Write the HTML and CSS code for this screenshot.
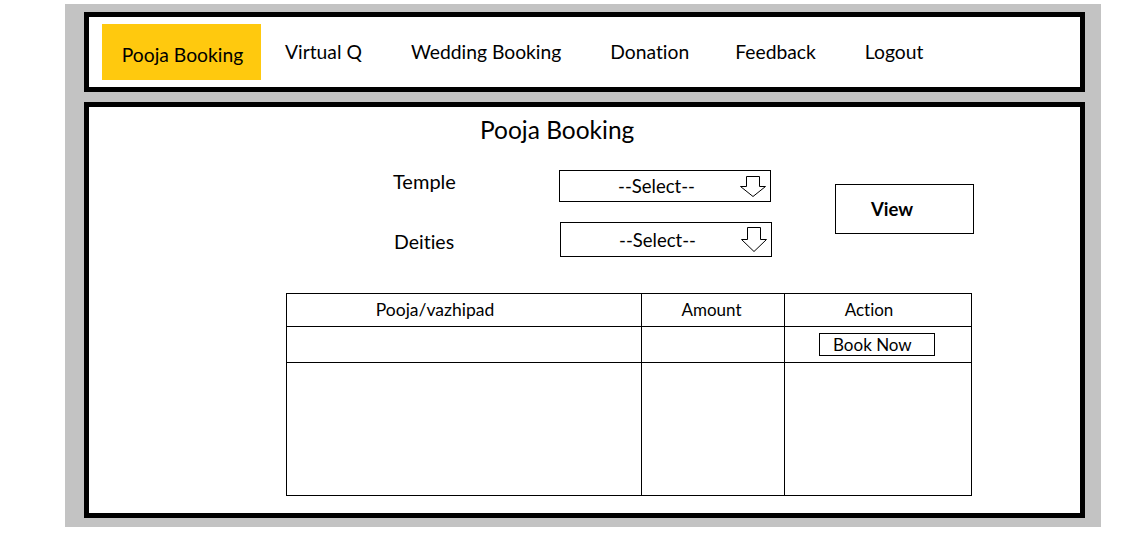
FILE: index.html
```html
<!DOCTYPE html>
<html lang="en">
<head>
<meta charset="utf-8">
<title>Pooja Booking</title>
<link rel="stylesheet" href="styles.css">
</head>
<body>
<div class="frame">
  <nav class="nav">
    <a class="tab tab-active">Pooja Booking</a>
    <div class="links">
      <a class="tab">Virtual Q</a>
      <a class="tab">Wedding Booking</a>
      <a class="tab">Donation</a>
      <a class="tab tab-feedback">Feedback</a>
      <a class="tab">Logout</a>
    </div>
  </nav>
  <main class="content">
    <h1 class="title">Pooja Booking</h1>
    <div class="form">
      <div class="fields">
        <label class="label label-temple">Temple</label>
        <div class="select select-temple">
          <span class="select-text">--Select--</span>
          <svg class="arrow" width="26" height="21" viewBox="0 0 26 21"><path d="M6.5 0.5H19.5V10.5H25.5L13 20.5L0.5 10.5H6.5Z" fill="#fff" stroke="#000" stroke-width="1"/></svg>
        </div>
        <label class="label label-deities">Deities</label>
        <div class="select select-deities">
          <span class="select-text">--Select--</span>
          <svg class="arrow" width="26" height="25" viewBox="0 0 26 25"><path d="M6.5 0.5H19.5V12.5H25.5L13 24.5L0.5 12.5H6.5Z" fill="#fff" stroke="#000" stroke-width="1"/></svg>
        </div>
      </div>
      <button class="view">View</button>
    </div>
    <table class="grid">
      <thead>
        <tr class="row-head">
          <th class="col-pooja">Pooja/vazhipad</th>
          <th class="col-amount">Amount</th>
          <th class="col-action">Action</th>
        </tr>
      </thead>
      <tbody>
        <tr class="row-one">
          <td></td>
          <td></td>
          <td class="cell-action"><button class="book">Book Now</button></td>
        </tr>
        <tr class="row-two">
          <td></td>
          <td></td>
          <td></td>
        </tr>
      </tbody>
    </table>
  </main>
</div>
</body>
</html>
```

FILE: styles.css
```css
* { box-sizing: border-box; }
html, body { margin: 0; padding: 0; background: #fff; }
body {
  font-family: Lato, "Open Sans", sans-serif;
  color: #000;
  font-variant-ligatures: none;
}

.frame {
  margin: 4px 0 0 65px;
  width: 1036px;
  height: 523px;
  background: #c3c3c3;
  padding: 8px 16px 9px 19px;
  display: flex;
  flex-direction: column;
  gap: 10px;
}

.nav {
  height: 80px;
  background: #fff;
  border: 5px solid #000;
  display: flex;
  align-items: center;
  padding-left: 13px;
}
.tab {
  font-size: 19.3px;
  line-height: 24px;
  color: #000;
  text-decoration: none;
  white-space: nowrap;
}
.tab-active {
  width: 159px;
  height: 56px;
  background: #ffc90e;
  display: flex;
  align-items: center;
  justify-content: center;
  padding: 5px 0 0 2px;
}
.links {
  display: flex;
  gap: 49px;
  margin-left: 24px;
}
.tab-feedback { margin-left: -3px; }

.content {
  flex: 1;
  background: #fff;
  border: 5px solid #000;
  padding: 8px 0 0 0;
}
.title {
  margin: 0 0 0 391px;
  font-size: 24.5px;
  line-height: 30px;
  font-weight: 400;
}
.form {
  display: flex;
  align-items: flex-start;
  margin: 25px 0 0 304px;
}
.fields {
  display: grid;
  grid-template-columns: 166px 213px;
  row-gap: 20px;
}
.label {
  font-size: 20px;
  line-height: 24px;
  align-self: start;
}
.label-temple { margin-top: -1px; }
.label-deities { margin-top: 8px; margin-left: 1px; font-size: 19.5px; }
.select {
  width: 212px;
  border: 1px solid #000;
  display: flex;
  align-items: center;
  padding: 0 4px 0 13px;
}
.select-temple { height: 32px; }
.select-deities { height: 35px; margin-left: 1px; }
.select-text {
  flex: 1;
  text-align: center;
  font-size: 18.5px;
  line-height: 24px;
}
.arrow { display: block; }
.view {
  margin: 14px 0 0 63px;
  width: 139px;
  height: 50px;
  background: #fff;
  border: 1.5px solid #000;
  font-family: Lato, "Open Sans", sans-serif;
  font-weight: 700;
  font-size: 18.5px;
  text-align: left;
  padding: 0 0 0 35px;
}

.grid {
  margin: 36px 0 0 197px;
  border-collapse: collapse;
  width: 686px;
  table-layout: fixed;
}
.grid th, .grid td {
  border: 1px solid #000;
  padding: 0;
  font-size: 17px;
  font-weight: 400;
  line-height: 20px;
}
.col-pooja { width: 355px; padding-right: 58px !important; font-size: 17.5px !important; }
.col-amount { width: 143px; padding-right: 3px !important; }
.col-action { padding-right: 18px !important; }
.row-head { height: 33px; }
.row-one { height: 36px; }
.row-two { height: 133px; }
.cell-action { padding-left: 34px !important; }
.book {
  display: block;
  width: 116px;
  height: 23px;
  background: #fff;
  border: 1px solid #000;
  font-family: Lato, "Open Sans", sans-serif;
  font-size: 17px;
  text-align: left;
  padding: 0 0 0 13px;
  line-height: 20px;
}
```
